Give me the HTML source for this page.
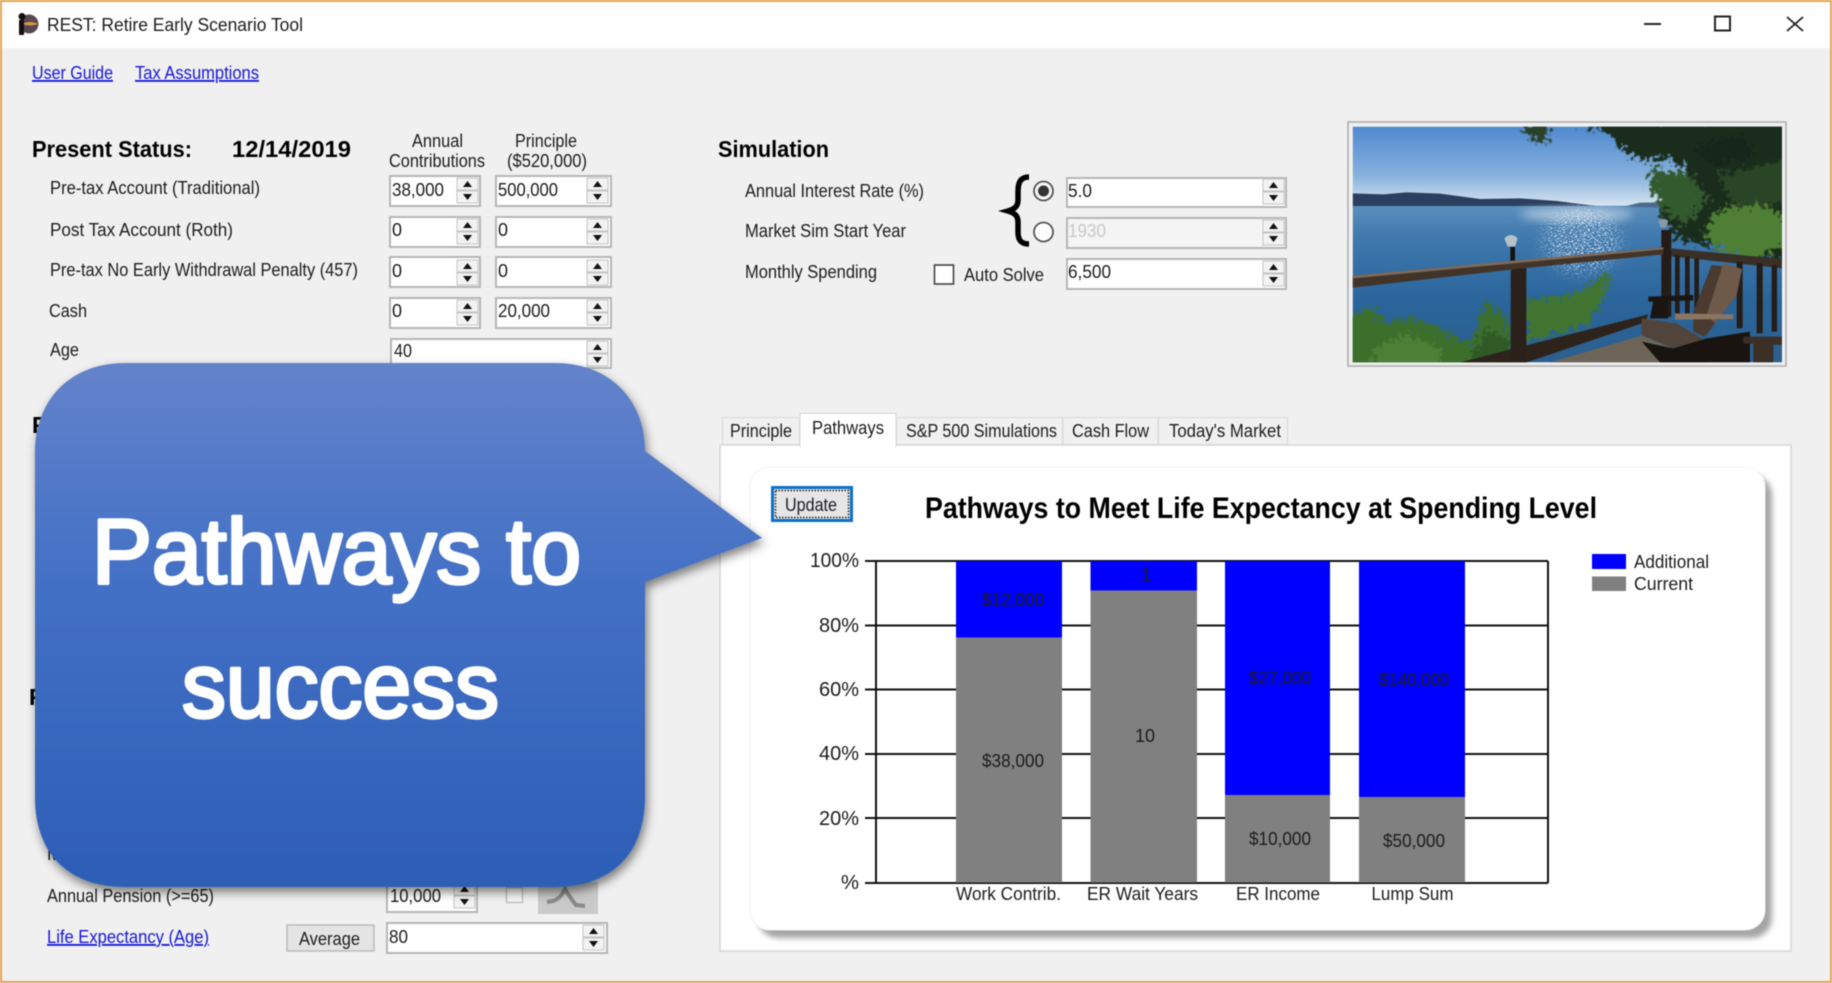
<!DOCTYPE html>
<html lang="en"><head><meta charset="utf-8"><title>REST: Retire Early Scenario Tool</title>
<style>
html,body{margin:0;padding:0;background:#f0f0f0;width:1832px;height:983px;overflow:hidden}
svg{display:block;filter:blur(.45px)}
text{font-family:"Liberation Sans",sans-serif;font-size:18px;fill:#1c1c1c}
.b{font-weight:bold;fill:#000}
.l{fill:#1616dc;text-decoration:underline}
.s{fill:#1a1a2a}
.h{font-size:92px;fill:#fff;stroke:#fff;stroke-width:3.5px;stroke-linejoin:round}
</style></head><body>
<svg xmlns="http://www.w3.org/2000/svg" width="1832" height="983" viewBox="0 0 1832 983">
<defs>
<linearGradient id="bub" gradientUnits="userSpaceOnUse" x1="0" y1="363" x2="0" y2="887"><stop offset="0" stop-color="#6483cb"/><stop offset=".4" stop-color="#4471c6"/><stop offset="1" stop-color="#2d5eb7"/></linearGradient>
<linearGradient id="sky" x1="0" y1="0" x2="0" y2="1"><stop offset="0" stop-color="#5089cf"/><stop offset=".6" stop-color="#86b0de"/><stop offset="1" stop-color="#d8e6f0"/></linearGradient>
<linearGradient id="wat" x1="0" y1="0" x2="0" y2="1"><stop offset="0" stop-color="#5b8ebc"/><stop offset=".2" stop-color="#3f79ae"/><stop offset=".6" stop-color="#2a659b"/><stop offset="1" stop-color="#2c5f8e"/></linearGradient>
<filter id="sh" x="-10%" y="-10%" width="125%" height="125%"><feDropShadow dx="2" dy="5" stdDeviation="5" flood-color="#000" flood-opacity=".5"/></filter>
<filter id="bl" x="-20%" y="-20%" width="140%" height="140%"><feGaussianBlur stdDeviation="3"/></filter>
<filter id="bl2" x="-30%" y="-30%" width="160%" height="160%"><feGaussianBlur stdDeviation="14"/></filter>
<filter id="leaf" filterUnits="userSpaceOnUse" x="0" y="0" width="1400" height="800" color-interpolation-filters="sRGB">
<feTurbulence type="fractalNoise" baseFrequency=".07" numOctaves="3" seed="4" result="n"/>
<feDisplacementMap in="SourceGraphic" in2="n" scale="70" xChannelSelector="R" yChannelSelector="G"/>
<feGaussianBlur stdDeviation="1.500"/>
</filter>
<filter id="spark" filterUnits="userSpaceOnUse" x="0" y="0" width="1400" height="800" color-interpolation-filters="sRGB">
<feTurbulence type="fractalNoise" baseFrequency=".16 .38" numOctaves="2" seed="7" result="n"/>
<feColorMatrix in="n" type="matrix" values="0 0 0 0 1  0 0 0 0 1  0 0 0 0 1  7 0 0 0 -3.700" result="w"/>
<feGaussianBlur in="SourceGraphic" stdDeviation="22" result="m"/>
<feComposite in="w" in2="m" operator="in"/>
<feGaussianBlur stdDeviation=".8"/>
</filter>
<clipPath id="ph"><rect x="38" y="35" width="1288" height="707"/></clipPath>
<g id="sp">
<rect x="0" y="0" width="21" height="12" fill="#f2f2f2" stroke="#c4c4c4"/>
<rect x="0" y="13" width="21" height="12" fill="#f2f2f2" stroke="#c4c4c4"/>
<path d="M10.5 3 L15 9 H6Z M6 16 H15 L10.5 22Z" fill="#111"/>
</g>
</defs>

<rect width="1832" height="983" fill="#f0f0f0"/>
<rect width="1832" height="48" fill="#fff"/>
<rect x="1" y="1" width="1830" height="981" fill="none" stroke="#e6a550" stroke-width="2"/>

<!-- title bar -->
<circle cx="29" cy="24" r="9.500" fill="#5a4650"/>
<path d="M22 24 Q30 20 38 24 Q30 27 22 24Z" fill="#d49a3c"/>
<rect x="19" y="20" width="5" height="15" fill="#141010"/>
<circle cx="22" cy="16.500" r="3.500" fill="#141010"/>
<text x="47" y="31" textLength="256" lengthAdjust="spacingAndGlyphs">REST: Retire Early Scenario Tool</text>
<rect x="1644" y="23" width="17" height="2" fill="#222"/>
<rect x="1715" y="16.500" width="15" height="14" fill="none" stroke="#222" stroke-width="2"/>
<path d="M1787 17 L1803 31 M1803 17 L1787 31" stroke="#222" stroke-width="1.800" fill="none"/>

<!-- links -->
<text class="l" x="32" y="79" textLength="81" lengthAdjust="spacingAndGlyphs">User Guide</text>
<text class="l" x="135" y="79" textLength="124" lengthAdjust="spacingAndGlyphs">Tax Assumptions</text>

<!-- present status -->
<text class="b" style="font-size:23px" x="32" y="157" textLength="160" lengthAdjust="spacingAndGlyphs">Present Status:</text>
<text class="b" style="font-size:23px" x="232" y="157" textLength="119" lengthAdjust="spacingAndGlyphs">12/14/2019</text>
<text x="412" y="147" textLength="51" lengthAdjust="spacingAndGlyphs">Annual</text>
<text x="389" y="167" textLength="96" lengthAdjust="spacingAndGlyphs">Contributions</text>
<text x="515" y="147" textLength="62" lengthAdjust="spacingAndGlyphs">Principle</text>
<text x="507" y="167" textLength="80" lengthAdjust="spacingAndGlyphs">($520,000)</text>
<text x="50" y="194" textLength="210" lengthAdjust="spacingAndGlyphs">Pre-tax Account (Traditional)</text>
<text x="50" y="236" textLength="183" lengthAdjust="spacingAndGlyphs">Post Tax Account (Roth)</text>
<text x="50" y="276" textLength="308" lengthAdjust="spacingAndGlyphs">Pre-tax No Early Withdrawal Penalty (457)</text>
<text x="49" y="317" textLength="38" lengthAdjust="spacingAndGlyphs">Cash</text>
<text x="50" y="356" textLength="29" lengthAdjust="spacingAndGlyphs">Age</text>

<g fill="#fff" stroke="#b6b6b6" stroke-width="2">
<rect x="390" y="176" width="90" height="30"/><rect x="496" y="176" width="115" height="30"/>
<rect x="390" y="217" width="90" height="30"/><rect x="496" y="217" width="115" height="30"/>
<rect x="390" y="257" width="90" height="30"/><rect x="496" y="257" width="115" height="30"/>
<rect x="390" y="298" width="90" height="30"/><rect x="496" y="298" width="115" height="30"/>
<rect x="391" y="339" width="220" height="29"/>
<rect x="1067" y="178" width="219" height="29"/>
<rect x="1067" y="218" width="219" height="30" fill="#f4f4f4"/>
<rect x="1067" y="259" width="219" height="30"/>
<rect x="387" y="878" width="90" height="34"/>
<rect x="387" y="923" width="220" height="30"/>
</g>
<use href="#sp" x="457" y="178"/><use href="#sp" x="587" y="178"/>
<use href="#sp" x="457" y="219"/><use href="#sp" x="587" y="219"/>
<use href="#sp" x="457" y="260"/><use href="#sp" x="587" y="260"/>
<use href="#sp" x="457" y="300"/><use href="#sp" x="587" y="300"/>
<use href="#sp" x="587" y="341"/>
<use href="#sp" x="1263" y="179"/><use href="#sp" x="1263" y="220"/><use href="#sp" x="1263" y="261"/>
<use href="#sp" x="454" y="883"/><use href="#sp" x="583" y="925"/>

<text x="392" y="196" textLength="52" lengthAdjust="spacingAndGlyphs">38,000</text>
<text x="498" y="196" textLength="60" lengthAdjust="spacingAndGlyphs">500,000</text>
<text x="392" y="236">0</text><text x="498" y="236">0</text>
<text x="392" y="277">0</text><text x="498" y="277">0</text>
<text x="392" y="317">0</text>
<text x="498" y="317" textLength="52" lengthAdjust="spacingAndGlyphs">20,000</text>
<text x="394" y="357" textLength="18" lengthAdjust="spacingAndGlyphs">40</text>

<!-- simulation -->
<text class="b" style="font-size:23px" x="718" y="157" textLength="111" lengthAdjust="spacingAndGlyphs">Simulation</text>
<text x="745" y="197" textLength="179" lengthAdjust="spacingAndGlyphs">Annual Interest Rate (%)</text>
<text x="745" y="237" textLength="161" lengthAdjust="spacingAndGlyphs">Market Sim Start Year</text>
<text x="745" y="278" textLength="132" lengthAdjust="spacingAndGlyphs">Monthly Spending</text>
<rect x="934.500" y="265" width="19" height="19" fill="#fff" stroke="#444" stroke-width="1.600"/>
<text x="964" y="281" textLength="80" lengthAdjust="spacingAndGlyphs">Auto Solve</text>
<path d="M1029 177 C1020 177 1018 183 1018 192 L1018 200 C1018 206 1015 209 1008 211 C1015 213 1018 216 1018 222 L1018 232 C1018 240 1021 244 1029 244" fill="none" stroke="#000" stroke-width="5.500"/>
<circle cx="1043.500" cy="191" r="9.500" fill="#f6f6f6" stroke="#555" stroke-width="1.800"/><circle cx="1043.500" cy="191" r="5.500" fill="#333"/>
<circle cx="1043.500" cy="232" r="9.500" fill="#fff" stroke="#555" stroke-width="1.800"/>
<text x="1068" y="197" textLength="24" lengthAdjust="spacingAndGlyphs">5.0</text>
<text x="1068" y="237" textLength="38" lengthAdjust="spacingAndGlyphs" style="fill:#c9c9c9">1930</text>
<text x="1068" y="278" textLength="43" lengthAdjust="spacingAndGlyphs">6,500</text>

<!-- photo -->
<rect x="1348" y="122" width="438" height="244" fill="#f0f0f0" stroke="#bcbcbc" stroke-width="2"/>
<g transform="translate(1340 115) scale(.33333)" clip-path="url(#ph)">
<rect x="38" y="35" width="1288" height="240" fill="url(#sky)"/>
<rect x="38" y="272" width="1288" height="470" fill="url(#wat)"/>
<path d="M38 235 L130 238 L200 232 L300 236 L420 252 L540 250 L650 258 L770 273 L38 273Z" fill="#2b3f60"/>
<path d="M850 275 L900 263 L960 262 L960 278Z" fill="#4a6a90"/>
<ellipse cx="710" cy="298" rx="170" ry="20" fill="#e6eef5" opacity=".6" filter="url(#bl2)"/>
<ellipse cx="725" cy="380" rx="115" ry="95" fill="#fff" filter="url(#spark)"/>
<g filter="url(#leaf)">
<path d="M640 20 L700 20 L800 50 L850 110 L900 130 L990 130 L1040 165 L950 215 L960 300 L1010 370 L1360 450 L1360 10Z" fill="#1a2d1c"/>
<path d="M540 25 L620 25 L630 85 L580 80Z" fill="#2b4029"/>
<path d="M930 160 L1040 170 L1110 250 L1040 330 L970 290 L930 215Z" fill="#33592f"/>
<ellipse cx="1225" cy="345" rx="125" ry="80" fill="#4f7f34"/>
<path d="M1130 180 L1360 130 L1360 260 L1190 280Z" fill="#2a4526"/>
<path d="M1060 90 L1200 60 L1250 120 L1110 150Z" fill="#15261a"/>
<path d="M20 760 L20 610 L85 575 L140 620 L225 610 L300 640 L390 690 L440 560 L500 610 L530 760Z" fill="#3c6f2c"/>
<path d="M100 700 L200 660 L300 700 L300 760 L100 760Z" fill="#4d7f34"/>
<path d="M558 555 L640 550 L720 530 L820 470 L780 560 L745 625 L558 680Z" fill="#41752f"/>
<path d="M380 760 L430 650 L510 670 L510 760Z" fill="#2f5925"/>
</g>
<path d="M360 742 L925 598 L915 622 L560 742Z" fill="#2d231b"/>
<path d="M630 742 L905 662 L1100 742Z" fill="#6d6558"/>
<rect x="512" y="445" width="47" height="297" fill="#2a211b"/>
<rect x="511" y="395" width="14" height="42" fill="#14110f"/>
<path d="M493 370 Q513 350 533 370 L525 395 H503Z" fill="#b7c2c8"/>
<rect x="964" y="345" width="30" height="260" fill="#241c17"/>
<path d="M955 318 Q970 305 985 318 L978 338 H962Z" fill="#8a9aa4"/>
<path d="M38 482 L510 438 L970 397 L970 418 L530 462 L38 518Z" fill="#43342a"/>
<path d="M38 482 L510 438 L970 397 L970 403 L510 446 L38 490Z" fill="#7d6b5c"/>
<path d="M993 400 L1326 432 L1326 460 L993 424Z" fill="#3a2f27"/>
<g fill="#241c16"><rect x="1005" y="420" width="14" height="190"/><rect x="1035" y="425" width="14" height="170"/><rect x="1063" y="430" width="14" height="150"/><rect x="1190" y="440" width="18" height="200"/><rect x="1250" y="445" width="18" height="210"/><rect x="1295" y="450" width="16" height="200"/></g>
<path d="M925 545 L1060 540 L1060 556 L925 560Z M940 556 L985 556 L985 610 L930 610Z" fill="#1b1511"/>
<path d="M1060 590 L1115 450 L1206 462 L1190 540 L1095 665 L1060 650Z" fill="#4a3a2f"/>
<path d="M1150 445 L1206 462 L1190 540 L1125 625 L1100 600Z" fill="#6f5a4a"/>
<path d="M905 610 L1010 625 L1100 680 L1000 700 L905 660Z" fill="#51443a"/>
<path d="M1005 595 L1180 598 L1180 612 L1005 614Z" fill="#8a7663"/>
<path d="M905 680 L1000 700 L1100 670 L1230 650 L1230 742 L960 742Z" fill="#1a1410"/>
<path d="M1210 665 L1326 665 L1326 690 L1210 685Z M1240 685 L1300 685 L1300 742 L1240 742Z" fill="#3b2f26"/>
</g>

<!-- tabs -->
<rect x="720" y="445" width="1071" height="506" fill="#fff" stroke="#d6d6d6" stroke-width="1.500"/>
<g fill="#f0f0f0" stroke="#d8d8d8">
<rect x="722.500" y="417.500" width="77" height="27"/>
<rect x="896.500" y="417.500" width="166" height="27"/>
<rect x="1063" y="417.500" width="95" height="27"/>
<rect x="1158.500" y="417.500" width="129" height="27"/>
</g>
<rect x="800" y="413.500" width="96" height="33" fill="#fff" stroke="#d8d8d8"/>
<rect x="801" y="444" width="94" height="3" fill="#fff"/>
<text x="730" y="437" textLength="62" lengthAdjust="spacingAndGlyphs">Principle</text>
<text x="812" y="434" textLength="72" lengthAdjust="spacingAndGlyphs">Pathways</text>
<text x="906" y="437" textLength="151" lengthAdjust="spacingAndGlyphs">S&amp;P 500 Simulations</text>
<text x="1072" y="437" textLength="77" lengthAdjust="spacingAndGlyphs">Cash Flow</text>
<text x="1169" y="437" textLength="112" lengthAdjust="spacingAndGlyphs">Today's Market</text>

<!-- chart card -->
<rect x="758" y="475" width="1014" height="463" rx="20" fill="#a4a4a4" filter="url(#bl)"/>
<rect x="750" y="467" width="1015" height="463" rx="20" fill="#fff" stroke="#f2f2f2"/>
<rect x="772.500" y="487.500" width="79" height="33" fill="#e6e6e6" stroke="#0a70c8" stroke-width="3"/>
<rect x="775.500" y="490.500" width="73" height="27" fill="none" stroke="#222" stroke-width="1.500" stroke-dasharray="1.500 1.500"/>
<text class="s" x="785" y="511" textLength="52" lengthAdjust="spacingAndGlyphs">Update</text>
<text class="b" style="font-size:30px" x="925" y="518" textLength="672" lengthAdjust="spacingAndGlyphs">Pathways to Meet Life Expectancy at Spending Level</text>

<!-- plot -->
<g stroke="#111" stroke-width="2" fill="none">
<path d="M865 561 H1548 M865 625.500 H1548 M865 689.500 H1548 M865 754 H1548 M865 818 H1548 M865 883 H1548 M876 561 V883 M1548 561 V883"/>
</g>
<g fill="#0000ff">
<rect x="956" y="561" width="106" height="77"/><rect x="1090.500" y="561" width="106.500" height="30"/>
<rect x="1225" y="561" width="105" height="234"/><rect x="1359" y="561" width="106" height="236"/>
</g>
<g fill="#808080">
<rect x="956" y="637.500" width="106" height="245"/><rect x="1090.500" y="590.500" width="106.500" height="292"/>
<rect x="1225" y="795" width="105" height="87.500"/><rect x="1359" y="797" width="106" height="85.500"/>
</g>
<g>
<text x="982" y="606" textLength="62" lengthAdjust="spacingAndGlyphs">$12,000</text>
<text x="1141" y="581">1</text>
<text x="1249" y="684" textLength="62" lengthAdjust="spacingAndGlyphs">$27,000</text>
<text x="1379" y="686" textLength="70" lengthAdjust="spacingAndGlyphs">$140,000</text>
<text x="982" y="767" textLength="62" lengthAdjust="spacingAndGlyphs">$38,000</text>
<text x="1135" y="742" textLength="20" lengthAdjust="spacingAndGlyphs">10</text>
<text x="1249" y="845" textLength="62" lengthAdjust="spacingAndGlyphs">$10,000</text>
<text x="1383" y="847" textLength="62" lengthAdjust="spacingAndGlyphs">$50,000</text>
</g>
<text style="font-size:20px" x="810" y="567" textLength="49" lengthAdjust="spacingAndGlyphs">100%</text>
<text style="font-size:20px" x="819" y="632" textLength="40" lengthAdjust="spacingAndGlyphs">80%</text>
<text style="font-size:20px" x="819" y="696" textLength="40" lengthAdjust="spacingAndGlyphs">60%</text>
<text style="font-size:20px" x="819" y="760" textLength="40" lengthAdjust="spacingAndGlyphs">40%</text>
<text style="font-size:20px" x="819" y="825" textLength="40" lengthAdjust="spacingAndGlyphs">20%</text>
<text style="font-size:20px" x="841" y="889" textLength="18" lengthAdjust="spacingAndGlyphs">%</text>
<text x="956" y="900" textLength="105" lengthAdjust="spacingAndGlyphs">Work Contrib.</text>
<text x="1087" y="900" textLength="111" lengthAdjust="spacingAndGlyphs">ER Wait Years</text>
<text x="1236" y="900" textLength="84" lengthAdjust="spacingAndGlyphs">ER Income</text>
<text x="1371.500" y="900" textLength="82" lengthAdjust="spacingAndGlyphs">Lump Sum</text>
<rect x="1592" y="554" width="34" height="15" fill="#0000ff"/>
<rect x="1592" y="576.500" width="34" height="14.500" fill="#808080"/>
<text x="1634" y="568" textLength="75" lengthAdjust="spacingAndGlyphs">Additional</text>
<text x="1634" y="590" textLength="59" lengthAdjust="spacingAndGlyphs">Current</text>

<!-- labels mostly covered by the bubble -->
<text class="b" style="font-size:23px" x="32" y="433">F</text>
<text class="b" style="font-size:23px" x="29" y="705">F</text>
<text x="47" y="860">M</text>

<!-- lower controls -->
<text x="47" y="902" textLength="167" lengthAdjust="spacingAndGlyphs">Annual Pension (&gt;=65)</text>
<text x="390" y="902" textLength="51" lengthAdjust="spacingAndGlyphs">10,000</text>
<rect x="506.500" y="887.500" width="16" height="15" fill="#f6f6f6" stroke="#c0c0c0" stroke-width="1.500"/>
<rect x="538" y="882" width="60" height="32" fill="#c9c9c9"/>
<path d="M547 902 L553 901 Q560 899 565 889 Q571 899 576 905 L585 906" fill="none" stroke="#8a8a8a" stroke-width="4"/>
<text class="l" x="47" y="943" textLength="162" lengthAdjust="spacingAndGlyphs">Life Expectancy (Age)</text>
<rect x="287" y="925" width="87" height="26" fill="#e4e4e4" stroke="#bbb" stroke-width="1.500"/>
<text x="299" y="945" textLength="61" lengthAdjust="spacingAndGlyphs">Average</text>
<text x="389" y="943" textLength="19" lengthAdjust="spacingAndGlyphs">80</text>

<!-- bubble -->
<path d="M125 363 H555 C610 363 645 400 645 451 L762 538 L645 582 V797 C645 855 610 887 555 887 H125 C70 887 35 855 35 797 V453 C35 400 70 363 125 363Z" fill="url(#bub)" filter="url(#sh)"/>
<text class="h" x="92" y="583" textLength="489" lengthAdjust="spacingAndGlyphs">Pathways to</text>
<text class="h" x="182" y="717" textLength="317" lengthAdjust="spacingAndGlyphs">success</text>
</svg>
</body></html>
